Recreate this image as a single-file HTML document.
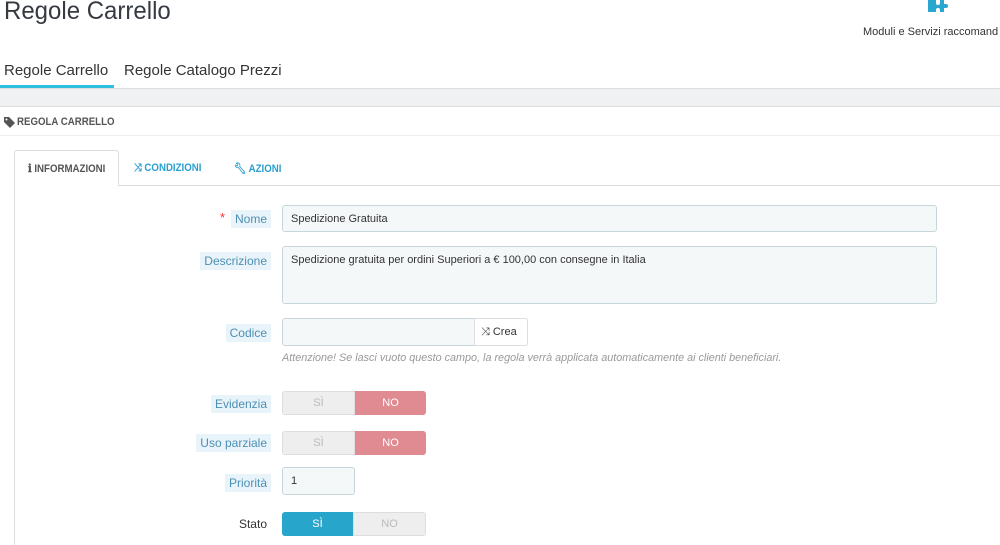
<!DOCTYPE html>
<html><head><meta charset="utf-8"><style>
*{box-sizing:border-box;margin:0;padding:0}
body{width:1000px;height:543px;overflow:hidden;background:#fff;font-family:"Liberation Sans",sans-serif;color:#333;position:relative}
.a{position:absolute}
.lbl{position:absolute;right:729px;font-size:12px;color:#4d8fb5;background:#e8f4f9;padding:2px 4px;white-space:nowrap}
.inp{position:absolute;background:#f5f8f9;border:1px solid #c7d6db;border-radius:3px;font-size:11px;color:#333;padding:7px 8px}
.tg{position:absolute;left:282px;width:144px;height:24px;border-radius:3px;overflow:hidden;display:flex;font-size:11px}
.tg div{flex:1;display:flex;align-items:center;justify-content:center}
.off{background:#eee;color:#bbb;border:1px solid #ddd}
.no{background:#e08b92;color:#fff}
.yes{background:#28a5cb;color:#fff}
.tb{font-size:11px;font-weight:bold;transform:scaleX(.88);transform-origin:left;white-space:nowrap}
</style></head><body>
<div class="a" style="left:4px;top:-3px;font-size:25px;color:#363a41;transform:scaleX(.96);transform-origin:left">Regole Carrello</div>
<svg class="a" style="left:926px;top:0" width="24" height="14" viewBox="0 0 24 14"><path d="M2 0h8v3a2 2 0 104 0V0h4v4h2a2 2 0 110 4h-2v4h-4v-2a2 2 0 10-4 0v2H2z" fill="#2aa7cf"/></svg>
<div class="a" style="left:863px;top:26px;font-size:11px;color:#333;white-space:nowrap">Moduli e Servizi raccomand</div>
<div class="a" style="left:4px;top:62px;font-size:15px;color:#333">Regole Carrello</div>
<div class="a" style="left:124px;top:62px;font-size:15px;color:#333">Regole Catalogo Prezzi</div>
<div class="a" style="left:0;top:88px;width:1000px;height:19px;background:#eff1f2;border-top:1px solid #ddd;border-bottom:1px solid #ddd"></div>
<div class="a" style="left:0;top:85px;width:114px;height:3px;background:#2fc0e0"></div>
<svg class="a" style="left:4px;top:117px" width="11" height="11" viewBox="0 0 11 11"><path d="M0 0h5l6 6-5 5-6-6z" fill="#555"/><circle cx="2.5" cy="2.5" r="1" fill="#fff"/></svg>
<div class="a tb" style="left:17px;top:116px;color:#555">REGOLA CARRELLO</div>
<div class="a" style="left:0;top:135px;width:1000px;height:1px;background:#eee"></div>
<div class="a" style="left:14px;top:185px;width:986px;height:1px;background:#ddd"></div>
<div class="a" style="left:14px;top:150px;width:105px;height:36px;background:#fff;border:1px solid #ddd;border-bottom:none;border-radius:3px 3px 0 0"></div>
<div class="a" style="left:14px;top:185px;width:1px;height:360px;background:#ddd"></div>
<div class="a tb" style="left:28px;top:162px;color:#555">ℹ INFORMAZIONI</div>
<div class="a tb" style="left:134px;top:162px;color:#2a9fd0">⤨ CONDIZIONI</div>
<div class="a tb" style="left:234px;top:162px;color:#2a9fd0">🔧︎ AZIONI</div>
<div class="a" style="left:220px;top:210px;color:#e33;font-size:13px">*</div>
<div class="lbl" style="top:210px">Nome</div>
<div class="inp" style="left:282px;top:205px;width:655px;height:27px">Spedizione Gratuita</div>
<div class="lbl" style="top:252px">Descrizione</div>
<div class="inp" style="left:282px;top:246px;width:655px;height:58px">Spedizione gratuita per ordini Superiori a € 100,00 con consegne in Italia</div>
<div class="lbl" style="top:324px">Codice</div>
<div class="inp" style="left:282px;top:318px;width:193px;height:28px;border-radius:3px 0 0 3px"></div>
<div class="a" style="left:474px;top:318px;width:54px;height:28px;border:1px solid #ddd;border-radius:0 3px 3px 0;background:#fff;font-size:11px;padding:7px 6px">⤨ Crea</div>
<div class="a" style="left:282px;top:352px;font-size:10.8px;font-style:italic;color:#999;white-space:nowrap">Attenzione! Se lasci vuoto questo campo, la regola verrà applicata automaticamente ai clienti beneficiari.</div>
<div class="lbl" style="top:395px">Evidenzia</div>
<div class="tg" style="top:391px"><div class="off">SÌ</div><div class="no">NO</div></div>
<div class="lbl" style="top:434px">Uso parziale</div>
<div class="tg" style="top:431px"><div class="off">SÌ</div><div class="no">NO</div></div>
<div class="lbl" style="top:474px">Priorità</div>
<div class="inp" style="left:282px;top:467px;width:73px;height:28px">1</div>
<div class="lbl" style="top:515px;background:none;color:#333">Stato</div>
<div class="tg" style="top:512px"><div class="yes">SÌ</div><div class="off">NO</div></div>
</body></html>
